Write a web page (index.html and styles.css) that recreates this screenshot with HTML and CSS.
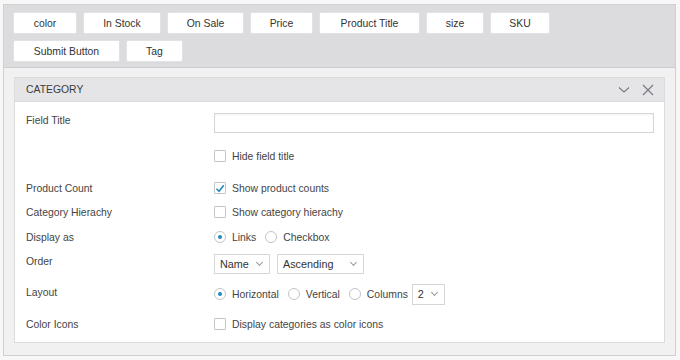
FILE: index.html
```html
<!DOCTYPE html>
<html lang="en">
<head>
    <meta charset="UTF-8">
    <title>Filter Fields</title>
    <link rel="stylesheet" href="styles.css">
</head>
<body>
    <div class="frame">
        <!-- available fields -->
        <div class="toolbar">
            <button class="field-btn w-color">color</button>
            <button class="field-btn w-stock">In Stock</button>
            <button class="field-btn w-sale">On Sale</button>
            <button class="field-btn w-price">Price</button>
            <button class="field-btn w-title">Product Title</button>
            <button class="field-btn w-size">size</button>
            <button class="field-btn w-sku">SKU</button>
            <button class="field-btn w-submit">Submit Button</button>
            <button class="field-btn w-tag">Tag</button>
        </div>

        <div class="panel">
            <div class="panel-head">
                <span>CATEGORY</span>
                <div class="head-icons">
                    <svg width="12" height="8" viewBox="0 0 12 8"><path d="M1 1.5 L6 6 L11 1.5" fill="none" stroke="#787c82" stroke-width="1.1"/></svg>
                    <svg width="12" height="12" viewBox="0 0 12 12"><path d="M1 1 L11 11 M11 1 L1 11" fill="none" stroke="#787c82" stroke-width="1.2"/></svg>
                </div>
            </div>
            <div class="panel-body">
                <div class="row r-title">
                    <label class="top">Field Title</label>
                    <input type="text" class="text-input">
                </div>
                <div class="row r-hide">
                    <span></span>
                    <div class="opts"><span class="check"></span><span>Hide field title</span></div>
                </div>
                <div class="row r-count">
                    <label>Product Count</label>
                    <div class="opts">
                        <span class="check on"><svg width="10" height="9" viewBox="0 0 10 9"><path d="M1.5 4.8 L4 7.3 L8.8 1.2" fill="none" stroke="#1e8cbe" stroke-width="1.6"/></svg></span>
                        <span>Show product counts</span>
                    </div>
                </div>
                <div class="row r-hier">
                    <label>Category Hierachy</label>
                    <div class="opts"><span class="check"></span><span>Show category hierachy</span></div>
                </div>
                <div class="row r-display">
                    <label>Display as</label>
                    <div class="opts">
                        <span class="radio on"></span><span>Links</span>
                        <span class="radio next"></span><span>Checkbox</span>
                    </div>
                </div>
                <div class="row r-order">
                    <label class="top">Order</label>
                    <div class="opts">
                        <div class="select w-name">Name<span class="caret"></span></div>
                        <div class="select w-asc">Ascending<span class="caret"></span></div>
                    </div>
                </div>
                <div class="row r-layout">
                    <label class="top">Layout</label>
                    <div class="opts">
                        <span class="radio on"></span><span>Horizontal</span>
                        <span class="radio next"></span><span>Vertical</span>
                        <span class="radio next"></span><span>Columns</span>
                        <div class="select w-cols">2<span class="caret"></span></div>
                    </div>
                </div>
                <div class="row r-icons">
                    <label>Color Icons</label>
                    <div class="opts"><span class="check"></span><span>Display categories as color icons</span></div>
                </div>
            </div>
        </div>
    </div>
</body>
</html>
```

FILE: styles.css
```css
body {
    margin: 0;
    background-color: #f7f7f7;
    font-family: 'Liberation Sans', Arial, sans-serif;
    font-size: 10.4px;
    color: #444;
}
.frame {
    margin: 4px 4px 0 3px;
    height: 352px;
    border: 1px solid #cfcfd2;
    background-color: #f1f1f1;
    box-sizing: border-box;
}
.toolbar {
    background-color: #dcdcde;
    border-bottom: 1px solid #cdcdd0;
    padding: 7px 100px 6px 9px;
    display: flex;
    flex-wrap: wrap;
    gap: 6px;
    height: 63px;
    box-sizing: border-box;
    align-content: flex-start;
}
.field-btn {
    height: 22px;
    background-color: #fff;
    border: 1px solid #e2e2e4;
    border-radius: 2px;
    font-family: inherit;
    font-size: 10.4px;
    color: #333;
    padding: 0;
}
.w-color { width: 64px; }
.w-stock { width: 78px; }
.w-sale { width: 77px; }
.w-price { width: 63px; }
.w-title { width: 101px; }
.w-size { width: 58px; }
.w-sku { width: 60px; }
.w-submit { width: 107px; }
.w-tag { width: 57px; }

.panel {
    margin: 9px 10px 0 10px;
    height: 266px;
    box-sizing: border-box;
    border: 1px solid #dcdcde;
    background-color: #fff;
}
.panel-head {
    height: 23px;
    background-color: #e5e5e7;
    border-bottom: 1px solid #dcdcde;
    display: flex;
    align-items: center;
    justify-content: space-between;
    padding: 0 10px 0 11px;
    color: #3c3c3c;
}
.head-icons {
    display: flex;
    align-items: center;
    gap: 12px;
}
.panel-body {
    padding: 9px 10px 6px 11px;
}
.row {
    display: grid;
    grid-template-columns: 188px 1fr;
    align-items: center;
    height: 24px;
}
.row .top {
    align-self: start;
    padding-top: 4px;
}
.r-layout .top { padding-top: 5px; }
.r-hide { margin-top: 9px; }
.r-count { margin-top: 8px; }
.r-display { margin-top: 1px; }
.r-order { margin-top: 3px; }
.r-layout { margin-top: 6px; }
.r-icons { margin-top: 6px; }

.text-input {
    height: 20px;
    box-sizing: border-box;
    border: 1px solid #d6d6d8;
    box-shadow: inset 0 1px 2px rgba(0,0,0,0.05);
    margin: 0;
    width: 440px;
}
.opts {
    display: flex;
    align-items: center;
    gap: 6px;
}
.check, .radio {
    width: 12px;
    height: 12px;
    box-sizing: border-box;
    border: 1px solid #c3c4c7;
    background-color: #fff;
    flex-shrink: 0;
    display: flex;
    align-items: center;
    justify-content: center;
}
.check {
    border-radius: 1px;
}
.radio {
    border-radius: 50%;
}
.radio.on::after {
    content: "";
    width: 4px;
    height: 4px;
    border-radius: 50%;
    background-color: #1e8cbe;
}
.radio.next {
    margin-left: 3px;
}
.select {
    height: 20px;
    box-sizing: border-box;
    border: 1px solid #d6d6d8;
    background-color: #fff;
    display: flex;
    align-items: center;
    justify-content: space-between;
    padding: 0 7px 0 5px;
    font-size: 10.8px;
    color: #333;
}
.caret {
    width: 4px;
    height: 4px;
    border-right: 1px solid #9a9a9e;
    border-bottom: 1px solid #9a9a9e;
    transform: rotate(45deg);
    margin-top: -3px;
}
.w-name { width: 56px; margin-right: 1px; }
.w-asc { width: 87px; }
.w-cols { width: 33px; height: 21px; margin-left: -2px; }
```
